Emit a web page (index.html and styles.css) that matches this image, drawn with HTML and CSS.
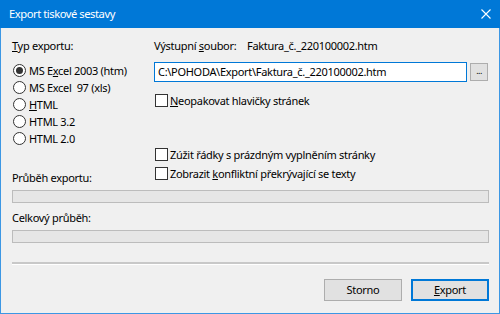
FILE: index.html
```html
<!DOCTYPE html>
<html lang="cs">
<head>
<meta charset="utf-8">
<title>Export tiskové sestavy</title>
<link rel="stylesheet" href="styles.css">
</head>
<body>
<div class="window">
  <div class="titlebar">
    <span class="title">Export tiskové sestavy</span>
    <svg class="close" width="10" height="10" viewBox="0 0 10 10"><path d="M0.5 0.5 L9.5 9.5 M9.5 0.5 L0.5 9.5" stroke="#fff" stroke-width="1.1" fill="none"/></svg>
  </div>
  <div class="content">
    <div class="top">
      <div class="left">
        <div class="label"><u>T</u>yp exportu:</div>
        <div class="radios">
          <div class="opt"><span class="radio checked"></span><span>MS E<u>x</u>cel 2003 (htm)</span></div>
          <div class="opt"><span class="radio"></span><span>MS Excel&nbsp; 97 (xls)</span></div>
          <div class="opt"><span class="radio"></span><span><u>H</u>TML</span></div>
          <div class="opt"><span class="radio"></span><span>HTML 3.2</span></div>
          <div class="opt"><span class="radio"></span><span>HTML 2.0</span></div>
        </div>
        <div class="label bottom-label">Průběh exportu:</div>
      </div>
      <div class="right">
        <div class="file-row"><span class="file-label">Výstupní <u>s</u>oubor:</span><span>Faktura_č._220100002.htm</span></div>
        <div class="path-row">
          <div class="input">C:\POHODA\Export\Faktura_č._220100002.htm</div>
          <div class="browse">...</div>
        </div>
        <div class="check first"><span class="box"></span><span><u>N</u>eopakovat hlavičky stránek</span></div>
        <div class="check second"><span class="box"></span><span>Zúžit řádky s prázdným vyplněním stránky</span></div>
        <div class="check"><span class="box"></span><span>Zobrazit <u>k</u>onfliktní překrývající se texty</span></div>
      </div>
    </div>
    <div class="progress"></div>
    <div class="label total">Celkový průběh:</div>
    <div class="progress"></div>
    <div class="separator"></div>
    <div class="buttons">
      <div class="btn">Storno</div>
      <div class="btn default"><u>E</u>xport</div>
    </div>
  </div>
</div>
</body>
</html>
```
FILE: styles.css
```css
* { box-sizing: border-box; }
html, body { margin: 0; padding: 0; }
body {
  width: 500px;
  height: 314px;
  font-family: "Noto Sans", "Open Sans", sans-serif;
  font-size: 11px;
  letter-spacing: -0.3px;
  color: #000;
  background: #f0f0f0;
}
.window {
  width: 500px;
  height: 314px;
  border: 1px solid #3c97e4;
  border-top: none;
  background: #f0f0f0;
  display: flex;
  flex-direction: column;
}
.titlebar {
  height: 28px;
  margin: 0 -1px;
  background: #0078d7;
  color: #fff;
  display: flex;
  align-items: center;
  justify-content: space-between;
  padding: 0 9px 1px 9px;
}
.title { line-height: 16px; font-size: 11.2px; letter-spacing: -0.45px; }
.close { display: block; }
.content {
  padding: 0 10px 0 11px;
  display: flex;
  flex-direction: column;
}
.label { line-height: 16px; height: 16px; white-space: nowrap; }
.top { display: flex; }
.left {
  width: 142px;
  display: flex;
  flex-direction: column;
  padding-top: 10px;
}
.radios { margin-top: 8px; display: flex; flex-direction: column; }
.opt {
  height: 17px;
  display: flex;
  align-items: center;
  white-space: nowrap;
}
.radio {
  width: 13px;
  height: 13px;
  border: 1px solid #333;
  border-radius: 50%;
  background: #fff;
  margin: 0 3px 0 1px;
  position: relative;
  flex: none;
}
.radio.checked::after {
  content: "";
  position: absolute;
  left: 2px; top: 2px;
  width: 7px; height: 7px;
  border-radius: 50%;
  background: #333;
}
.bottom-label { margin-top: auto; }
.right {
  flex: 1;
  padding-top: 10px;
  padding-bottom: 5px;
  display: flex;
  flex-direction: column;
}
.file-row { line-height: 16px; height: 16px; display: flex; white-space: nowrap; }
.file-label { width: 93px; }
.path-row { display: flex; margin-top: 8px; height: 20px; }
.input {
  width: 313px;
  height: 20px;
  border: 1px solid #0078d7;
  background: #fff;
  padding: 0 3px;
  line-height: 18px;
  white-space: nowrap;
}
.browse {
  margin-left: 3px;
  margin-top: 1px;
  width: 18px;
  height: 18px;
  border: 1px solid #adadad;
  background: #e1e1e1;
  font-size: 9px;
  line-height: 14px;
  text-align: center;
  letter-spacing: -0.5px;
}
.check {
  height: 16px;
  display: flex;
  align-items: center;
  white-space: nowrap;
  margin-top: 3px;
}
.check.first { margin-top: 10px; }
.check.second { margin-top: 38px; }
.box {
  width: 13px;
  height: 13px;
  border: 1px solid #333;
  background: #fff;
  margin: 0 2px 0 1px;
  flex: none;
}
.progress {
  margin-top: 4px;
  height: 13px;
  border: 1px solid #bcbcbc;
  background: #e6e6e6;
}
.total { margin-top: 7px; }
.separator {
  margin-top: 19px;
  height: 3px;
  border-top: 2px solid #c8c8c8;
  border-bottom: 1px solid #fff;
}
.buttons {
  margin-top: 14px;
  display: flex;
  justify-content: flex-end;
  gap: 9px;
}
.btn {
  width: 78px;
  height: 22px;
  border: 1px solid #adadad;
  background: #e1e1e1;
  text-align: center;
  line-height: 20px;
}
.btn.default { border: 1px solid #0078d7; box-shadow: inset 0 0 0 1px #0078d7; }
```
